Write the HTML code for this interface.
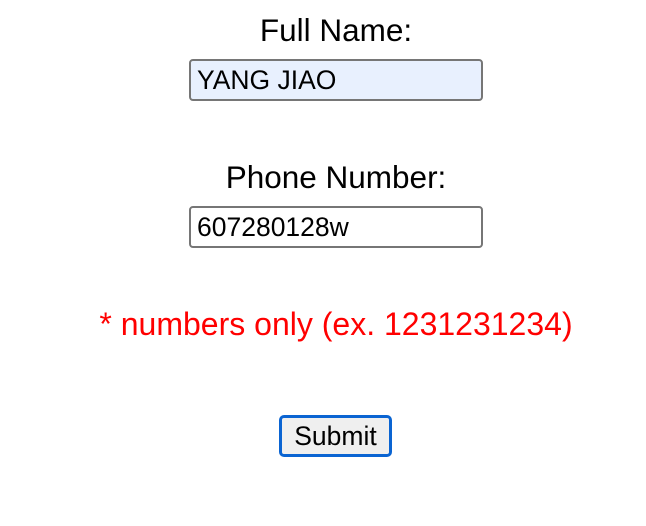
<!DOCTYPE html>
<html><head><style>
body{margin:0;width:646px;height:526px;background:#fff;font-family:"Liberation Sans",Arial,sans-serif;position:relative}
.l{position:absolute;left:0;width:672px;text-align:center;font-size:31.5px;color:#000}
.i{position:absolute;left:189px;border:2px solid #767676;border-radius:4px;font-size:26.5px;line-height:38px;padding-left:6px;box-sizing:border-box;width:294px;height:42px}
.b{position:absolute;left:279px;top:415px;width:113px;height:42px;box-sizing:border-box;border:3px solid #0a64d2;border-radius:5px;background:#efefef;font-size:26.5px;text-align:center;line-height:36px}
</style></head><body>
<div class="l" style="top:12px">Full Name:</div>
<div class="i" style="top:59px;background:#e8f0fe">YANG JIAO</div>
<div class="l" style="top:159px">Phone Number:</div>
<div class="i" style="top:206px;background:#fff">607280128w</div>
<div class="l" style="top:306px;font-size:32px;color:#ff0000">* numbers only (ex. 1231231234)</div>
<div class="b">Submit</div>
</body></html>
